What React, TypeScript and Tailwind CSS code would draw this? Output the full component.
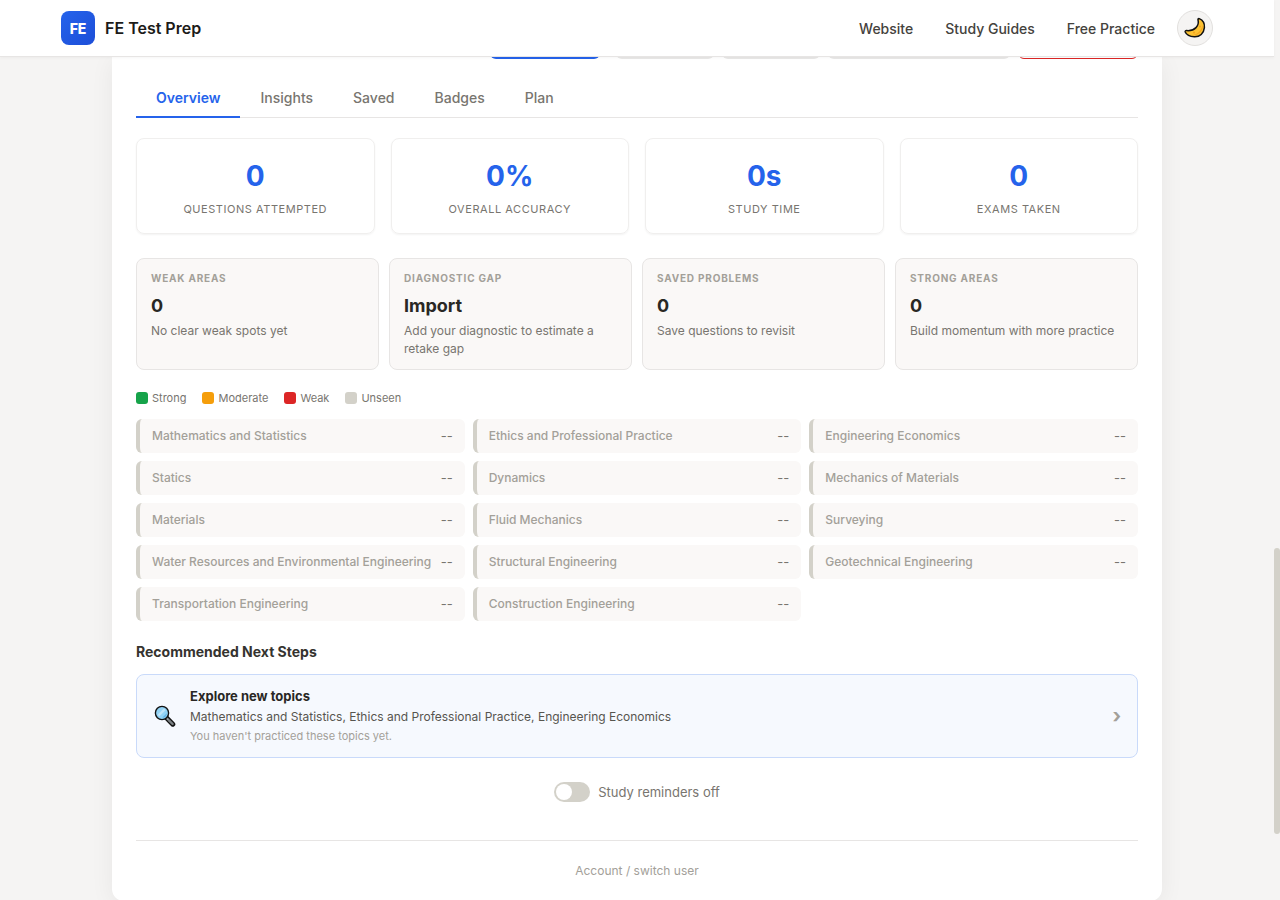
import { useState } from 'react'

const tabs = ['Overview', 'Insights', 'Saved', 'Badges', 'Plan']

const stats = [
  { value: '0', label: 'Questions Attempted' },
  { value: '0%', label: 'Overall Accuracy' },
  { value: '0s', label: 'Study Time' },
  { value: '0', label: 'Exams Taken' },
]

const signals = [
  { label: 'Weak Areas', value: '0', note: 'No clear weak spots yet' },
  { label: 'Diagnostic Gap', value: 'Import', note: 'Add your diagnostic to estimate a retake gap' },
  { label: 'Saved Problems', value: '0', note: 'Save questions to revisit' },
  { label: 'Strong Areas', value: '0', note: 'Build momentum with more practice' },
]

const legend = [
  { label: 'Strong', color: 'bg-[#16a34a]' },
  { label: 'Moderate', color: 'bg-[#f59e0b]' },
  { label: 'Weak', color: 'bg-[#dc2626]' },
  { label: 'Unseen', color: 'bg-[#d3d1c9]' },
]

const topics = [
  'Mathematics and Statistics',
  'Ethics and Professional Practice',
  'Engineering Economics',
  'Statics',
  'Dynamics',
  'Mechanics of Materials',
  'Materials',
  'Fluid Mechanics',
  'Surveying',
  'Water Resources and Environmental Engineering',
  'Structural Engineering',
  'Geotechnical Engineering',
  'Transportation Engineering',
  'Construction Engineering',
]

function MoonIcon() {
  return (
    <svg width="22" height="22" viewBox="0 0 22 22" aria-hidden="true">
      <path
        d="M15.2 1.6C18.6 3 20.8 6.4 20.4 10.6C19.8 16.4 15.8 20 10.4 19.8C6 19.6 2.4 17.6 1.2 15C.9 14.1 1.6 13.5 2.6 13.6C6.6 14 9.8 12.8 12 10.6C14 8.6 14.8 6 14 2.8C13.8 1.9 14.4 1.3 15.2 1.6Z"
        fill="#fcc233"
        stroke="#111"
        strokeWidth="1.5"
        strokeLinejoin="round"
      />
      <path d="M18.8 7.6C19.4 13.6 15.4 18.4 8.6 18.4C13 17.4 17.4 14.2 18.8 7.6Z" fill="#f3a41f" />
      <circle cx="16" cy="9.4" r="1" fill="#f3a41f" />
      <circle cx="10" cy="15.6" r="1.1" fill="#f3a41f" />
    </svg>
  )
}

function SearchIcon() {
  return (
    <svg width="22" height="22" viewBox="0 0 22 22" aria-hidden="true">
      <path d="M12.2 12.6L18.8 19.2" stroke="#111" strokeWidth="5" strokeLinecap="round" />
      <path d="M12.6 13L14.6 15" stroke="#9aa0a3" strokeWidth="2" />
      <path d="M15.2 15.6L18.6 19" stroke="#7b8184" strokeWidth="2.4" strokeLinecap="round" />
      <circle cx="8" cy="8" r="6.6" fill="#92d3f5" stroke="#111" strokeWidth="1.4" />
      <path d="M3.8 9.6L9.6 3.8A4.6 4.6 0 0 1 11.6 5.2L5.2 11.6A4.6 4.6 0 0 1 3.8 9.6Z" fill="#bfe4f8" />
      <path d="M12.8 8.2A4.8 4.8 0 0 1 8.2 12.8L12.8 8.2Z" fill="#61b2e4" />
    </svg>
  )
}

function Header() {
  return (
    <header className="relative z-10 shrink-0 border-b border-[#e7e5e4] bg-white shadow-[0_1px_3px_rgba(0,0,0,0.04)]">
      <div className="mx-auto flex h-14 max-w-[1200px] items-center justify-between px-6">
        <a href="#home" className="flex items-center gap-2.5">
          <span className="flex size-[34px] items-center justify-center rounded-lg bg-linear-to-br from-[#2563eb] to-[#1d4ed8] pt-0.5 text-sm font-extrabold text-white">
            FE
          </span>
          <span className="font-semibold text-[#1c1b19]">FE Test Prep</span>
        </a>
        <nav className="flex items-center text-sm font-medium text-[#44423d]">
          <div className="flex gap-8 pt-0.5">
            <a href="#website">Website</a>
            <a href="#guides">Study Guides</a>
            <a href="#practice">Free Practice</a>
          </div>
          <button
            type="button"
            aria-label="Dark mode"
            className="ml-[22px] flex size-9 items-center justify-center rounded-full border border-[#e2e0de] bg-[#f5f4f3]"
          >
            <MoonIcon />
          </button>
        </nav>
      </div>
    </header>
  )
}

export default function App() {
  const [tab, setTab] = useState('Overview')
  const [reminders, setReminders] = useState(false)

  return (
    <div className="flex h-screen overflow-hidden bg-[#f5f4f3] font-['Inter',sans-serif]">
      <div className="flex min-w-0 flex-1 flex-col">
        <Header />

        <main className="mx-auto w-full max-w-[1050px] shrink-0 rounded-b-xl bg-white px-6 pb-5 shadow-[0_4px_24px_rgba(0,0,0,0.06)]">
          {/* lower edge of the action row that has scrolled under the header */}
          <div className="flex h-0.5 items-end justify-end gap-2 overflow-hidden">
            <div className="mr-2 h-9 w-[110px] shrink-0 rounded-md bg-[#2563eb]" />
            <div className="h-9 w-[98px] shrink-0 rounded-md bg-[#e9e8e7]" />
            <div className="h-9 w-[98px] shrink-0 rounded-md bg-[#e9e8e7]" />
            <div className="h-9 w-[182px] shrink-0 rounded-md bg-[#e9e8e7]" />
            <div className="h-9 w-[120px] shrink-0 rounded-md border border-[#dc2626]" />
          </div>

          <div role="tablist" className="mt-5 flex border-b border-[#e7e5e4]">
            {tabs.map((name) => (
              <button
                key={name}
                type="button"
                role="tab"
                aria-selected={tab === name}
                onClick={() => setTab(name)}
                className={`-mb-px h-[39px] border-b-2 px-5 text-sm ${
                  tab === name
                    ? 'border-[#2563eb] font-semibold text-[#2563eb]'
                    : 'border-transparent font-medium text-[#78756f]'
                }`}
              >
                {name}
              </button>
            ))}
          </div>

          <section className="mt-5 grid grid-cols-4 gap-4">
            {stats.map((stat) => (
              <div
                key={stat.label}
                className="rounded-lg border border-[#f0efee] px-4 pt-5 pb-4 text-center shadow-[0_1px_2px_rgba(0,0,0,0.05)]"
              >
                <div className="text-[28px] leading-[34px] font-bold text-[#2563eb]">{stat.value}</div>
                <div className="mt-2 text-[11px] leading-4 tracking-wider text-[#78756f] uppercase">
                  {stat.label}
                </div>
              </div>
            ))}
          </section>

          <section className="mt-6 grid grid-cols-4 gap-2.5">
            {signals.map((item) => (
              <div key={item.label} className="rounded-lg border border-[#e7e5e4] bg-[#faf8f7] px-3.5 py-[11px]">
                <div className="text-[10px] leading-4 font-bold tracking-[0.08em] text-[#a3a099] uppercase">
                  {item.label}
                </div>
                <div className="mt-1.5 text-lg leading-7 font-bold text-[#292724]">{item.value}</div>
                <div className="mt-0.5 text-xs leading-[18px] text-[#78756f]">{item.note}</div>
              </div>
            ))}
          </section>

          <div className="mt-5 flex gap-4 text-[11px] leading-4 text-[#78756f]">
            {legend.map((item) => (
              <span key={item.label} className="flex items-center gap-1">
                <span className={`size-3 rounded-[3px] ${item.color}`} />
                {item.label}
              </span>
            ))}
          </div>

          <ul className="mt-[13px] grid grid-cols-3 gap-2">
            {topics.map((topic) => (
              <li
                key={topic}
                className="flex items-center justify-between rounded-md border-l-4 border-[#d3d1c9] bg-[#faf8f7] px-3 py-2 text-xs leading-[18px] text-[#a3a099]"
              >
                <span className="font-medium">{topic}</span>
                <span className="text-[13px] text-[#78756f]">--</span>
              </li>
            ))}
          </ul>

          <h3 className="mt-5 text-sm leading-[22px] font-bold text-[#35332f]">Recommended Next Steps</h3>
          <a
            href="#explore"
            className="mt-[11px] flex items-center rounded-lg border border-[#c9dafa] bg-[#f6f9fe] px-4 py-3"
          >
            <span className="mr-3.5 ml-px">
              <SearchIcon />
            </span>
            <span className="flex-1">
              <span className="block text-[13px] leading-[18px] font-bold text-[#292724]">Explore new topics</span>
              <span className="mt-0.5 block text-xs leading-5 text-[#57554f]">
                Mathematics and Statistics, Ethics and Professional Practice, Engineering Economics
              </span>
              <span className="block text-[11px] leading-[18px] text-[#a3a099]">
                You haven't practiced these topics yet.
              </span>
            </span>
            <span className="text-xl leading-5 font-bold text-[#a3a099]">›</span>
          </a>

          <div className="mt-6 flex justify-center">
            <label className="flex items-center gap-2 text-[13px] leading-[18px] text-[#78756f]">
              <input
                type="checkbox"
                checked={reminders}
                onChange={() => setReminders(!reminders)}
                className="h-5 w-9 appearance-none rounded-full bg-[#d3d1c9] p-0.5 before:block before:size-4 before:rounded-full before:bg-white checked:bg-[#2563eb] checked:before:ml-4"
              />
              Study reminders {reminders ? 'on' : 'off'}
            </label>
          </div>

          <div className="mt-[38px] border-t border-[#e7e5e4] pt-4 text-center">
            <button type="button" className="text-xs leading-5 text-[#a3a099]">
              Account / switch user
            </button>
          </div>
        </main>
      </div>

      <div className="w-1.5 shrink-0 pt-[548px]">
        <div className="h-[286px] rounded-full bg-[#d3d1c9]" />
      </div>
    </div>
  )
}
